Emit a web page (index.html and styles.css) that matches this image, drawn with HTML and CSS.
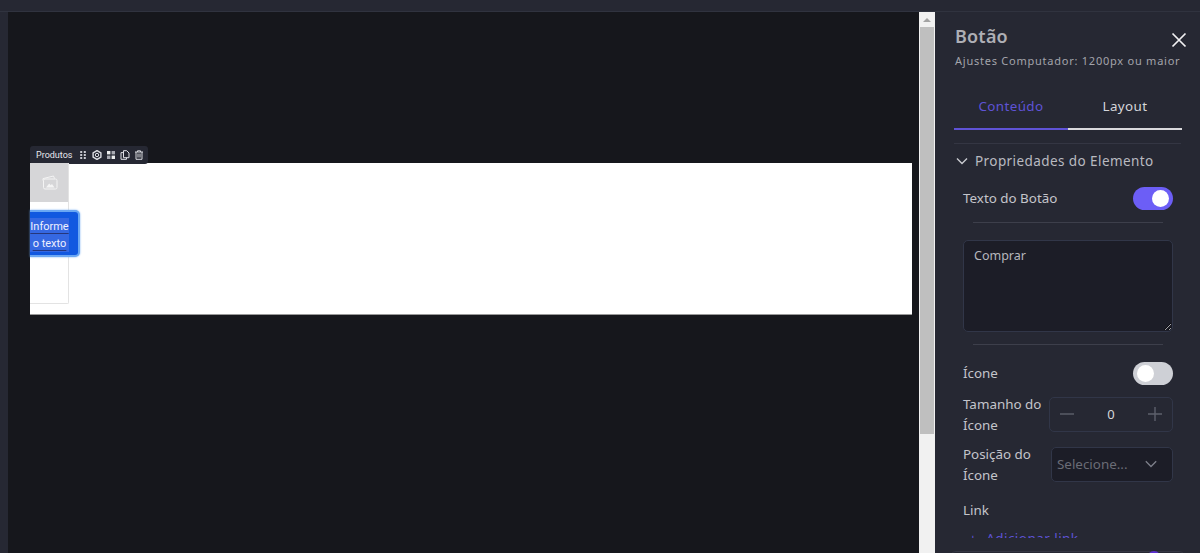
FILE: index.html
```html
<!DOCTYPE html>
<html lang="pt">
<head>
<meta charset="utf-8">
<title>Editor</title>
<link rel="stylesheet" href="styles.css">
</head>
<body>
<div class="topbar"></div>
<div class="main">
  <div class="rail"></div>
  <div class="canvas">
    <div class="section">
      <div class="toolbar">
        <span class="toolbar-label">Produtos</span>
        <svg class="tb-icon" viewBox="0 0 10 10"><g fill="#c9cad2"><rect x="2.2" y="1" width="2" height="2"/><rect x="5.8" y="1" width="2" height="2"/><rect x="2.2" y="4" width="2" height="2"/><rect x="5.8" y="4" width="2" height="2"/><rect x="2.2" y="7" width="2" height="2"/><rect x="5.8" y="7" width="2" height="2"/></g></svg>
        <svg class="tb-icon" viewBox="0 0 10 10"><path d="M5 .6 8.9 2.8v4.4L5 9.4 1.1 7.2V2.8z" fill="none" stroke="#dfe0e6" stroke-width="1.4"/><circle cx="5" cy="5" r="1.7" fill="none" stroke="#dfe0e6" stroke-width="1"/></svg>
        <svg class="tb-icon" viewBox="0 0 10 10"><g fill="#eceded"><rect x="1" y="1" width="3.4" height="3.4"/><rect x="5.6" y="1" width="3.4" height="3.4" fill="#a9aab2"/><rect x="1" y="5.6" width="3.4" height="3.4" fill="#a9aab2"/><rect x="5.6" y="5.6" width="3.4" height="3.4"/></g></svg>
        <svg class="tb-icon" viewBox="0 0 10 10"><path d="M3.5 .7h3.2l2.3 2.3v4.7H3.5zM3.5 2.6H1v6.7h5.5V7.7" fill="none" stroke="#dfe0e6" stroke-width="1"/></svg>
        <svg class="tb-icon" viewBox="0 0 10 10"><path d="M1 2h8M3.5 2V.8h3V2M2 2v7.3h6V2M4 3.5v4M6 3.5v4" fill="none" stroke="#dfe0e6" stroke-width=".95"/></svg>
      </div>
      <div class="card">
        <div class="card-image">
          <svg class="img-icon" viewBox="0 0 16 15"><path d="M1 5.5V3.6L11.5 1l1 2.5" fill="none" stroke="#f4f4f4" stroke-width="1"/><rect x="1.5" y="4" width="13.5" height="10" rx="1.5" fill="none" stroke="#f4f4f4" stroke-width="1"/><path d="M4 12.5 7.2 8.5l1.5 1.7L10 9l2.5 3.5z" fill="#f4f4f4"/></svg>
        </div>
        <div class="buy-button"><span class="buy-text"><span class="buy-line">Informe</span><br><span class="buy-line">o texto</span></span></div>
      </div>
    </div>
  </div>
  <div class="scrollbar">
    <div class="scroll-arrow"></div>
    <div class="scroll-thumb"></div>
  </div>
  <aside class="panel">
    <div class="panel-head">
      <div class="panel-heading">
        <h1 class="panel-title">Botão</h1>
        <p class="panel-sub">Ajustes Computador: 1200px ou maior</p>
      </div>
      <svg class="close" viewBox="0 0 16 16"><path d="M1.5 1.5l13 13M14.5 1.5l-13 13" stroke="#f1f1f3" stroke-width="1.7" fill="none"/></svg>
    </div>
    <div class="tabs">
      <div class="tab tab-active">Conteúdo</div>
      <div class="tab">Layout</div>
    </div>
    <div class="accordion">
      <div class="acc-head">
        <svg class="chev" viewBox="0 0 12 8"><path d="M1 1.5l5 5 5-5" fill="none" stroke="#c9cad0" stroke-width="1.4"/></svg>
        <span>Propriedades do Elemento</span>
      </div>
      <div class="row row-toggle">
        <span>Texto do Botão</span>
        <span class="toggle toggle-on"><span class="knob"></span></span>
      </div>
      <div class="divider"></div>
      <textarea class="textarea">Comprar</textarea>
      <div class="divider divider-2"></div>
      <div class="row row-icon">
        <span>Ícone</span>
        <span class="toggle toggle-off"><span class="knob"></span></span>
      </div>
      <div class="row row-size">
        <span class="field-label">Tamanho do Ícone</span>
        <div class="stepper">
          <svg class="step-icon" viewBox="0 0 14 14"><path d="M0 7h14" stroke="#5d606c" stroke-width="1.4"/></svg>
          <span class="step-value">0</span>
          <svg class="step-icon" viewBox="0 0 14 14"><path d="M0 7h14M7 0v14" stroke="#5d606c" stroke-width="1.4"/></svg>
        </div>
      </div>
      <div class="row row-pos">
        <span class="field-label">Posição do Ícone</span>
        <div class="select">
          <span>Selecione...</span>
          <svg class="sel-chev" viewBox="0 0 12 8"><path d="M.8 1.2 6 6.5l5.2-5.3" fill="none" stroke="#7d7f8a" stroke-width="1.3"/></svg>
        </div>
      </div>
      <div class="link-label">Link</div>
      <div class="link-add"><span class="link-plus">+</span> Adicionar link</div>
    </div>
    <div class="panel-foot"><span class="foot-dot"></span></div>
  </aside>
</div>
</body>
</html>
```
FILE: styles.css
```css
* { box-sizing: border-box; }
html, body { margin: 0; height: 100%; overflow: hidden; }
body {
  width: 1200px;
  height: 553px;
  background: #262833;
  font-family: "Noto Sans", "Open Sans", sans-serif;
  display: flex;
  flex-direction: column;
}
.topbar { height: 12px; flex: none; background: #262833; border-bottom: 1px solid #30333f; }
.main { flex: 1; display: flex; min-height: 0; }
.rail { width: 8px; flex: none; background: #262833; }
.canvas { width: 911px; flex: none; background: #16171c; padding: 151px 7px 0 22px; }
.section { width: 882px; height: 152px; position: relative; background: #fff; border-bottom: 1px solid #999; }
.toolbar {
  position: absolute;
  left: 0;
  top: -17px;
  height: 18px;
  width: 118px;
  background: #262833;
  border-radius: 3px;
  display: flex;
  align-items: center;
  padding-left: 6px;
  font-family: "Roboto", sans-serif;
  font-size: 9px;
  color: #e7e7ee;
}
.toolbar-label { width: 37px; margin-right: 5px; white-space: nowrap; }
.tb-icon { width: 10px; height: 10px; margin-right: 4px; flex: none; }
.card {
  width: 39px;
  height: 141px;
  background: #fff;
  border-right: 1px solid #e3e3e3;
  border-bottom: 1px solid #e3e3e3;
  border-radius: 0 0 2px 0;
  position: relative;
}
.card-image {
  height: 39px;
  background: #d6d6d8;
  display: flex;
  align-items: center;
  justify-content: center;
}
.img-icon { width: 16px; height: 15px; margin-left: 1px; }
.buy-button {
  position: absolute;
  left: 0;
  top: 47px;
  width: 50px;
  height: 47px;
  background: #1158e0;
  border: 2px solid #6aa7f3;
  border-left: 0;
  border-radius: 0 5px 5px 0;
  box-shadow: 0 0 2px #6aa7f3;
}
.buy-text {
  display: block;
  width: 39px;
  margin-top: 6px;
  text-align: center;
  font-family: "Roboto", sans-serif;
  font-size: 11px;
  line-height: 17px;
  color: #eef1ff;
  background: #3568e2;
}
.buy-line { text-decoration: underline; text-decoration-color: #26367a; text-underline-offset: 3px; }
.scrollbar { width: 16px; flex: none; background: #f1f1f1; }
.scroll-arrow { height: 15px; background: #f1f1f1; position: relative; }
.scroll-arrow::after {
  content: "";
  position: absolute;
  left: 4px;
  top: 6px;
  border: 4px solid transparent;
  border-top: 0;
  border-bottom: 4px solid #a3a3a3;
}
.scroll-thumb { width: 14px; margin: 0 1px; height: 407px; background: #bfbfbf; }
.panel {
  width: 265px;
  flex: none;
  background: #262833;
  padding: 0 19px 0 19px;
  position: relative;
  overflow: hidden;
  color: #c4c5cb;
}
.panel-head { display: flex; justify-content: space-between; height: 57px; }
.panel-heading { flex: 1; min-width: 0; }
.panel-title { margin: 11px 0 0 1px; font-size: 18px; line-height: 26px; font-weight: 600; color: #aeafb5; letter-spacing: .2px; }
.panel-sub { margin: 4px 0 0 1px; font-size: 11px; line-height: 15px; color: #a3a4ab; letter-spacing: .76px; white-space: nowrap; }
.close { width: 16px; height: 16px; margin: 20px -6px 0 0; flex: none; }
.tabs { display: flex; height: 61px; width: 228px; }
.tab {
  width: 114px;
  padding-top: 28px;
  height: 61px;
  text-align: center;
  font-size: 13.4px;
  line-height: 18px;
  letter-spacing: .4px;
  color: #d5d6da;
  border-bottom: 2px solid #d9d9dc;
}
.tab-active { color: #5f53d6; border-bottom-color: #5f53d6; }
.accordion { margin-top: 13px; border-top: 1px solid #343643; width: 227px; height: 395px; overflow: hidden; }
.acc-head { display: flex; align-items: center; height: 33px; font-size: 13.5px; letter-spacing: .42px; color: #b9bac0; white-space: nowrap; }
.chev { width: 12px; height: 8px; margin: 0 7px 0 2px; flex: none; }
.row { display: flex; justify-content: space-between; align-items: center; margin-left: 9px; width: 210px; font-size: 13.4px; color: #c4c5cb; }
.row-toggle { height: 24px; margin-top: 9px; }
.toggle { width: 40px; height: 23px; border-radius: 12px; display: flex; align-items: center; padding: 0 4px; flex: none; }
.toggle-on { background: #6c5ef6; justify-content: flex-end; }
.toggle-off { background: #ced0d6; }
.knob { width: 17px; height: 17px; border-radius: 50%; background: #fff; }
.divider { height: 1px; width: 190px; margin: 12px 0 0 19px; background: #3d3f4b; }
.divider-2 { margin-top: 12px; }
.textarea {
  display: block;
  width: 210px;
  height: 92px;
  margin: 17px 0 0 9px;
  padding: 6px 10px;
  background: #1c1d27;
  border: 1px solid #313648;
  border-radius: 5px;
  color: #b6b7bd;
  font: 12.5px/18px "Noto Sans", sans-serif;
  outline: none;
}
.row-icon { height: 24px; margin-top: 16px; }
.row-size { height: 36px; margin-top: 11px; }
.row-pos { height: 36px; margin-top: 14px; }
.field-label { width: 82px; line-height: 20.5px; margin-top: 1px; flex: none; }
.stepper {
  width: 124px;
  height: 35px;
  border: 1px solid #313648;
  border-radius: 5px;
  display: flex;
  align-items: center;
  justify-content: space-between;
  padding: 0 10px;
}
.step-icon { width: 14px; height: 14px; }
.step-value { font-size: 13px; color: #d5d6da; }
.select {
  width: 122px;
  height: 35px;
  background: #1c1d27;
  border: 1px solid #313648;
  border-radius: 5px;
  display: flex;
  align-items: center;
  justify-content: space-between;
  padding: 0 15px 0 5px;
  color: #6a6c76;
}
.sel-chev { width: 12px; height: 8px; }
.link-label { margin: 18px 0 0 9px; font-size: 13.4px; line-height: 20px; color: #c4c5cb; }
.link-add { margin: 9px 0 0 15px; font-size: 13.4px; line-height: 18px; color: #5f53d6; letter-spacing: .5px; white-space: nowrap; }
.link-plus { margin-right: 5px; }
.panel-foot {
  position: absolute;
  left: 15px;
  right: 15px;
  top: 539px;
  height: 12px;
  background: #262833;
  border-top: 1px solid #343643;
  border-radius: 6px 6px 0 0;
}
.foot-dot {
  position: absolute;
  left: 197px;
  top: -1px;
  width: 14px;
  height: 14px;
  border-radius: 50%;
  background: #5b2ed0;
}
```
